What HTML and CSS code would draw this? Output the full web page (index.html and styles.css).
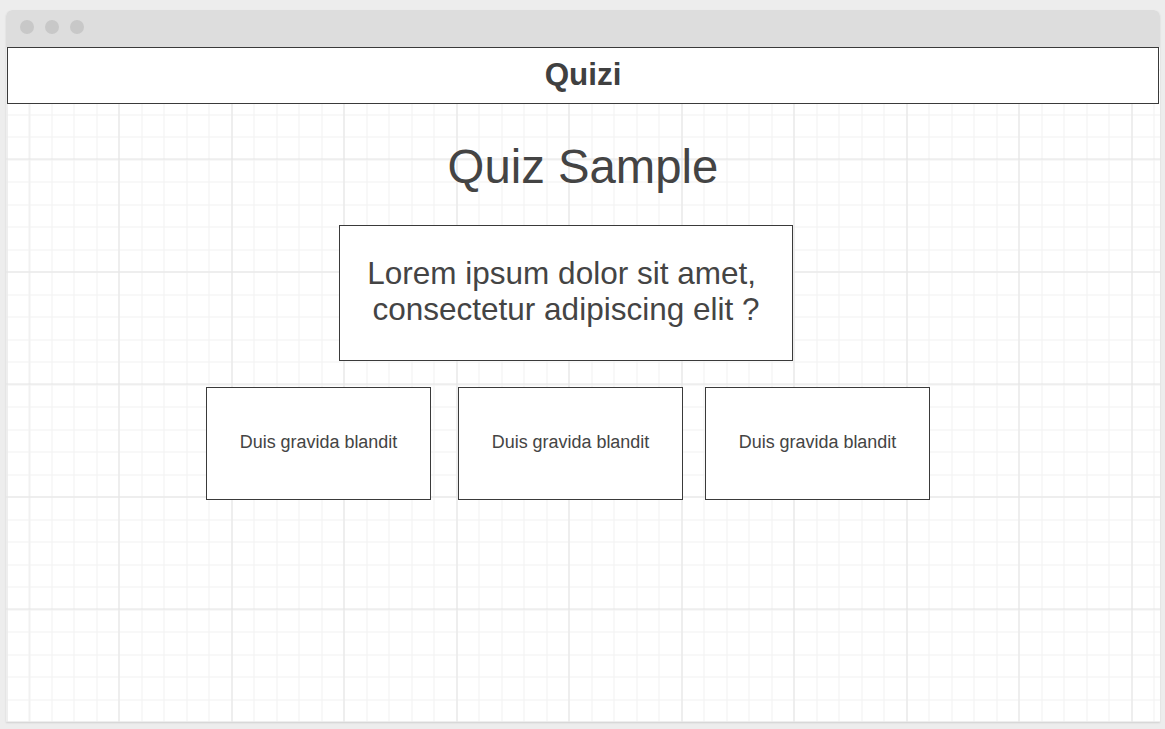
FILE: index.html
```html
<!DOCTYPE html>
<html lang="en">
<head>
<meta charset="utf-8">
<title>Quizi</title>
<link rel="stylesheet" href="styles.css">
</head>
<body>
<div class="window">
  <div class="titlebar">
    <span class="dot"></span><span class="dot"></span><span class="dot"></span>
  </div>
  <div class="body">
    <header class="app-header">Quizi</header>
    <main class="canvas">
      <h1 class="quiz-title">Quiz Sample</h1>
      <div class="question">
        <p class="question-text">Lorem ipsum dolor sit amet,&nbsp;<br>consectetur adipiscing elit ?</p>
      </div>
      <div class="answers">
        <div class="answer">Duis gravida blandit</div>
        <div class="answer answer-2">Duis gravida blandit</div>
        <div class="answer answer-3">Duis gravida blandit</div>
      </div>
    </main>
  </div>
</div>
</body>
</html>
```
FILE: styles.css
```css
html, body {
  margin: 0;
  padding: 0;
}
body {
  background: #ededed;
  font-family: "Liberation Sans", Arial, sans-serif;
  color: #444444;
  height: 729px;
  overflow: hidden;
}
.window {
  margin: 10px 0 0 6px;
  width: 1154px;
  height: 712px;
  border-radius: 6px 6px 0 0;
  overflow: hidden;
  background: #ffffff;
  box-shadow: 0 1px 2px rgba(0, 0, 0, 0.12);
  display: flex;
  flex-direction: column;
}
.titlebar {
  height: 37px;
  background: #dddddd;
  display: flex;
  align-items: flex-start;
  gap: 11px;
  padding: 10px 0 0 14px;
  box-sizing: border-box;
}
.dot {
  width: 14px;
  height: 14px;
  border-radius: 50%;
  background: #c8c8c8;
}
.body {
  flex: 1;
  display: flex;
  flex-direction: column;
  background-color: #ffffff;
  background-image:
    repeating-linear-gradient(to right, #e4e4e4 0 1px, transparent 1px 112.5px),
    repeating-linear-gradient(to bottom, #e4e4e4 0 1px, transparent 1px 112.5px),
    repeating-linear-gradient(to right, #f1f1f1 0 1px, transparent 1px 22.5px),
    repeating-linear-gradient(to bottom, #f1f1f1 0 1px, transparent 1px 22.5px);
  background-position: 0.5px -0.5px;
}
.app-header {
  margin: 0 1px;
  height: 57px;
  box-sizing: border-box;
  border: 1px solid #3a3a3a;
  background: #ffffff;
  display: flex;
  align-items: center;
  justify-content: center;
  font-size: 31.4px;
  font-weight: bold;
  color: #404040;
  padding-bottom: 2px;
}
.canvas {
  flex: 1;
  display: flex;
  flex-direction: column;
  padding-top: 35px;
}
.quiz-title {
  margin: 0;
  font-size: 47.3px;
  font-weight: normal;
  line-height: 56px;
  text-align: center;
  color: #444444;
}
.question {
  margin: 30px 0 0 333px;
  width: 454px;
  height: 136px;
  box-sizing: border-box;
  border: 1px solid #3a3a3a;
  background: #ffffff;
  display: flex;
  align-items: center;
  justify-content: center;
  padding-bottom: 3px;
}
.question-text {
  margin: 0;
  font-size: 31.5px;
  line-height: 35.7px;
  text-align: center;
}
.answers {
  display: flex;
  margin: 26px 0 0 200px;
}
.answer {
  width: 225px;
  height: 113px;
  box-sizing: border-box;
  border: 1px solid #3a3a3a;
  background: #ffffff;
  display: flex;
  align-items: center;
  justify-content: center;
  font-size: 17.95px;
  padding-bottom: 3px;
}
.answer-2 {
  margin-left: 27px;
}
.answer-3 {
  margin-left: 22px;
}
```
